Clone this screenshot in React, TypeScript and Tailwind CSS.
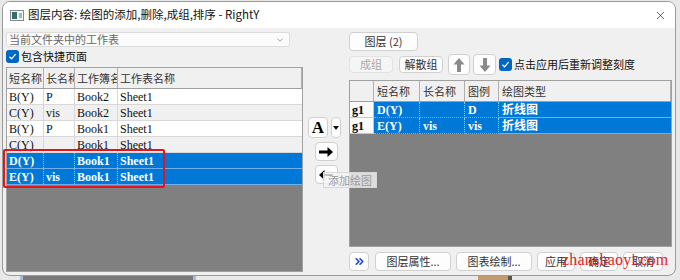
import { ChevronDown, ChevronsRight, X } from 'lucide-react';

interface LayerRow {
  short: string;
  long: string;
  book: string;
  sheet: string;
  selected?: boolean;
}

const sheetRows: LayerRow[] = [
  { short: 'B(Y)', long: 'P', book: 'Book2', sheet: 'Sheet1' },
  { short: 'C(Y)', long: 'vis', book: 'Book2', sheet: 'Sheet1' },
  { short: 'B(Y)', long: 'P', book: 'Book1', sheet: 'Sheet1' },
  { short: 'C(Y)', long: '', book: 'Book1', sheet: 'Sheet1' },
  { short: 'D(Y)', long: '', book: 'Book1', sheet: 'Sheet1', selected: true },
  { short: 'E(Y)', long: 'vis', book: 'Book1', sheet: 'Sheet1', selected: true },
];

const layerRows = [
  { short: 'D(Y)', long: '', legend: 'D', type: '折线图' },
  { short: 'E(Y)', long: 'vis', legend: 'vis', type: '折线图' },
];

const leftWidths = ['w-[37px]', 'w-[31px]', 'w-[43px]', 'flex-1'];
const rightWidths = ['w-[46px]', 'w-[45px]', 'w-[34px]', 'flex-1'];

const serif = "font-['Liberation_Serif','Noto_Sans_CJK_SC',serif]";

function Btn({ className = '', children }: { className?: string; children: React.ReactNode }) {
  return (
    <div
      className={`flex items-center justify-center bg-[#fdfdfd] border border-[#d0d0d0] rounded-[4px] text-[11px] text-[#333] whitespace-nowrap ${className}`}
    >
      {children}
    </div>
  );
}

function Check() {
  return (
    <div className="w-[13px] h-[13px] rounded-[3px] bg-[#0067c0] flex items-center justify-center shrink-0">
      <svg width="9" height="9" viewBox="0 0 9 9">
        <path d="M1.5 4.8 L3.6 6.8 L7.6 2.2" fill="none" stroke="white" strokeWidth="1.2" />
      </svg>
    </div>
  );
}

export default function App() {
  return (
    <div className="relative w-[680px] h-[280px] overflow-hidden bg-[#e8e8e8] font-['Noto_Sans_CJK_SC',sans-serif]">
      {/* Dialog window */}
      <div className="ml-[2px] mt-[1px] w-[674px] h-[275px] border border-[#9a9a9a] rounded-[8px] overflow-hidden flex flex-col bg-[#f0f0f0]">
        {/* Title bar */}
        <div className="h-[26px] bg-white flex items-center shrink-0">
          <svg width="14" height="11" viewBox="0 0 14 11" className="ml-[7px] mt-[1px]">
            <rect x="0.5" y="0.5" width="13" height="10" fill="#f4f4f4" stroke="#8a8a8a" />
            <rect x="2" y="2" width="5" height="7" fill="#2f6f68" />
            <rect x="9" y="3" width="3" height="5" fill="#9fb7c9" />
          </svg>
          <span className="ml-[4px] text-[11.5px] text-[#111] leading-none">
            图层内容: 绘图的添加,删除,成组,排序 - RightY
          </span>
          <X className="ml-auto mr-[8px] w-[13px] h-[13px] text-[#222]" strokeWidth={1.3} />
        </div>

        {/* Body */}
        <div className="flex-1 flex px-[3px] min-h-0">
          {/* Left panel */}
          <div className="w-[297px] flex flex-col pt-[4px] pb-[3px]">
            <div className="w-[284px] h-[15px] bg-[#fbfbfb] border border-[#dcdcdc] rounded-[2px] flex items-center pl-[2px] pr-[4px]">
              <span className="text-[11px] text-[#666] leading-none">当前文件夹中的工作表</span>
              <ChevronDown className="ml-auto w-[10px] h-[10px] text-[#666]" strokeWidth={1.5} />
            </div>
            <div className="mt-[2px] h-[14px] flex items-center gap-[2px]">
              <Check />
              <span className="text-[11px] text-[#111] leading-none">包含快捷页面</span>
            </div>

            <div className="mt-[4px] flex-1 border border-[#a0a0a0] bg-[#808080] flex flex-col overflow-hidden">
              <div className="h-[21px] flex bg-[#f0f0f0] border-b border-[#a0a0a0] shrink-0">
                {['短名称', '长名称', '工作簿名称', '工作表名称'].map((h, i) => (
                  <div
                    key={h}
                    className={`${leftWidths[i]} border-r border-[#b0b0b0] px-[2px] flex items-center overflow-hidden whitespace-nowrap text-[11px] text-[#333]`}
                  >
                    {h}
                  </div>
                ))}
              </div>
              {sheetRows.map((r, idx) => (
                <div
                  key={idx}
                  className={`h-[16px] flex shrink-0 border-b ${
                    r.selected
                      ? 'bg-[#0078d7] text-white font-bold border-[#6fb0ea]'
                      : idx % 2 === 0
                        ? 'bg-white text-[#111] border-[#d8d8d8]'
                        : 'bg-[#f0f0f0] text-[#111] border-[#d8d8d8]'
                  } ${serif} text-[12px]`}
                >
                  {[r.short, r.long, r.book, r.sheet].map((v, i) => (
                    <div
                      key={i}
                      className={`${leftWidths[i]} px-[2px] flex items-center overflow-hidden whitespace-nowrap leading-none ${
                        i < 3 ? (r.selected ? 'border-r border-dotted border-[#9cc8f0]' : 'border-r border-[#d8d8d8]') : ''
                      }`}
                    >
                      {v}
                    </div>
                  ))}
                </div>
              ))}
            </div>
          </div>

          {/* Middle buttons */}
          <div className="w-[46px] flex flex-col items-center pt-[89px]">
            <div className="flex gap-[3px] -ml-[3px]">
              <Btn className="w-[20px] h-[21px] rounded-[3px]">
                <span className={`${serif} text-[17px] font-bold text-black leading-none`}>A</span>
              </Btn>
              <Btn className="w-[10px] h-[21px] rounded-[3px]">
                <svg width="6" height="4" viewBox="0 0 6 4">
                  <path d="M0 0 H6 L3 4 Z" fill="#111" />
                </svg>
              </Btn>
            </div>
            <Btn className="mt-[4px] w-[23px] h-[19px] rounded-[3px]">
              <svg width="16" height="12" viewBox="0 0 16 12">
                <path d="M15 6 L9.5 1 V4.5 H1 V7.5 H9.5 V11 Z" fill="#000" />
              </svg>
            </Btn>
            <Btn className="mt-[4px] w-[23px] h-[19px] rounded-[3px]">
              <svg width="16" height="12" viewBox="0 0 16 12">
                <path d="M1 6 L6.5 1 V5 H15 V7 H6.5 V11 Z" fill="#000" />
              </svg>
            </Btn>
          </div>

          {/* Right panel */}
          <div className="w-[323px] flex flex-col pt-[4px] pb-[4px]">
            <Btn className="w-[69px] h-[19px] shrink-0">图层 (2)</Btn>
            <div className="mt-[3px] h-[21px] flex items-center shrink-0">
              <div className="w-[44px] h-[17px] flex items-center justify-center bg-[#f5f5f5] border border-[#e2e2e2] rounded-[4px] text-[11px] text-[#a8a8a8]">
                成组
              </div>
              <Btn className="ml-[6px] w-[44px] h-[17px]">解散组</Btn>
              <Btn className="ml-[5px] w-[22px] h-[21px] rounded-[3px]">
                <svg width="12" height="16" viewBox="0 0 12 16">
                  <path d="M6 1 L11.5 7.5 H8 V15 H4 V7.5 H0.5 Z" fill="#8a8a8a" />
                </svg>
              </Btn>
              <Btn className="ml-[3px] w-[23px] h-[21px] rounded-[3px]">
                <svg width="12" height="16" viewBox="0 0 12 16">
                  <path d="M6 15 L11.5 8.5 H8 V1 H4 V8.5 H0.5 Z" fill="#8a8a8a" />
                </svg>
              </Btn>
              <div className="ml-[3px] flex items-center gap-[2px]">
                <Check />
                <span className="text-[11px] text-[#111] leading-none">点击应用后重新调整刻度</span>
              </div>
            </div>

            <div className="mt-[5px] flex-1 border border-[#a0a0a0] bg-[#808080] flex flex-col overflow-hidden">
              <div className="h-[21px] flex bg-[#f0f0f0] border-b border-[#a0a0a0] shrink-0">
                <div className="w-[24px] border-r border-[#b0b0b0]" />
                {['短名称', '长名称', '图例', '绘图类型'].map((h, i) => (
                  <div
                    key={h}
                    className={`${rightWidths[i]} border-r border-[#b0b0b0] px-[3px] flex items-center overflow-hidden whitespace-nowrap text-[11px] text-[#333]`}
                  >
                    {h}
                  </div>
                ))}
              </div>
              {layerRows.map((r, idx) => (
                <div key={idx} className={`h-[16px] flex shrink-0 ${serif} text-[12px]`}>
                  <div className="w-[24px] bg-[#fafafa] border-r border-b border-[#c8c8c8] px-[2px] flex items-center font-bold text-black leading-none">
                    g1
                  </div>
                  {[r.short, r.long, r.legend, r.type].map((v, i) => (
                    <div
                      key={i}
                      className={`${rightWidths[i]} bg-[#0078d7] text-white font-bold border-b border-[#6fb0ea] px-[3px] flex items-center overflow-hidden whitespace-nowrap leading-none ${
                        i < 3 ? 'border-r border-dotted border-r-[#9cc8f0]' : ''
                      }`}
                    >
                      {v}
                    </div>
                  ))}
                </div>
              ))}
            </div>

            <div className="mt-[5px] h-[19px] flex items-center gap-[5px] shrink-0">
              <Btn className="w-[20px] h-[19px] mr-[1px]">
                <ChevronsRight className="w-[13px] h-[13px] text-[#1f3de8]" strokeWidth={3} />
              </Btn>
              <Btn className="w-[76px] h-[19px]">图层属性...</Btn>
              <Btn className="w-[76px] h-[19px]">图表绘制...</Btn>
              <Btn className="w-[38px] h-[19px]">应用</Btn>
              <Btn className="w-[38px] h-[19px] border-[#5a9ad8]">确定</Btn>
              <Btn className="w-[40px] h-[19px]">取消</Btn>
            </div>
          </div>
        </div>
      </div>

      {/* Strip of the desktop below the dialog */}
      <div className="flex h-[4px]">
        <div className="ml-[20px] w-[3px] bg-[#a9bad2]" />
        <div className="w-[170px] bg-[#7a7a7a]" />
        <div className="w-[3px] bg-[#a9bad2]" />
        <div className="ml-[282px] w-[30px] bg-[#c39a6e]" />
        <div className="w-[4px] bg-[#555]" />
      </div>

      {/* Tooltip over the remove button */}
      <div className="absolute left-[323px] top-[172px] w-[54px] h-[16px] bg-[#f4f4f4]/80 border border-[#d8d8d8] flex items-center justify-center text-[11px] text-[#9a9a9a] leading-none">
        添加绘图
      </div>

      {/* Red annotation around the selected rows */}
      <div className="absolute left-[3px] top-[149px] w-[162px] h-[39px] border-2 border-[#e3141c] rounded-[2px]" />

      {/* Watermark */}
      <div className={`absolute left-[562px] top-[252px] ${serif} text-[16px] tracking-[0.2px] text-[#e52228] leading-none pointer-events-none`}>
        zhanshaoyi.com
      </div>
    </div>
  );
}
